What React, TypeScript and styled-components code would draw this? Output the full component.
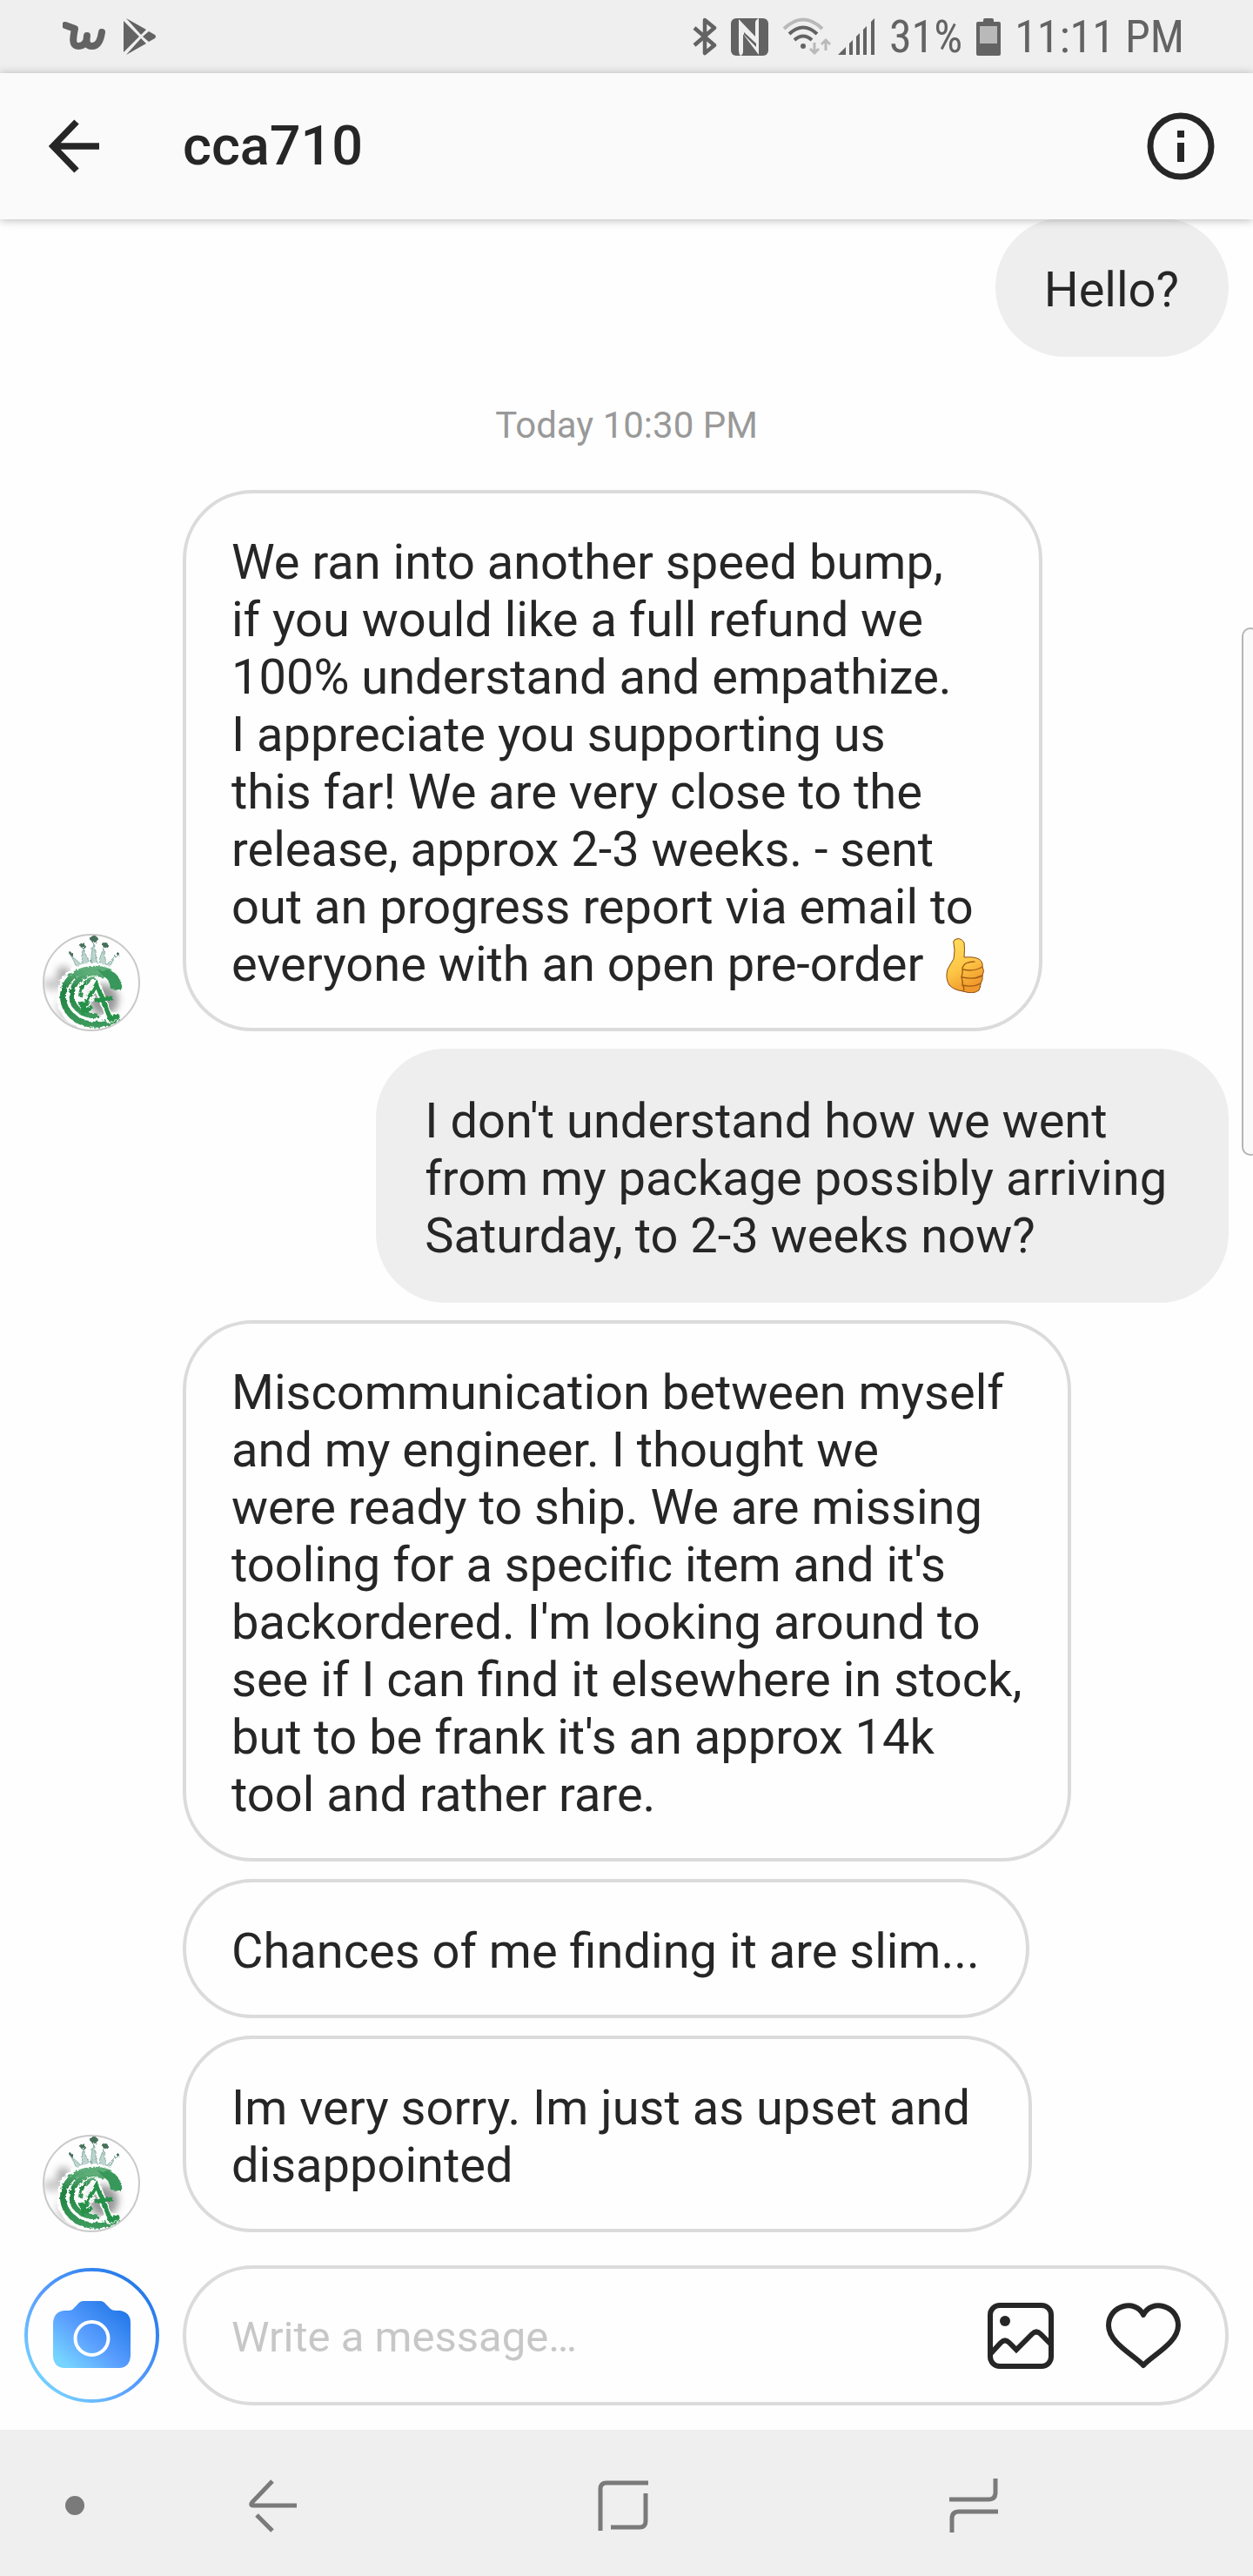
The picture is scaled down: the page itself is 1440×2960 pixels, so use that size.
import React from "react";
import styled, { createGlobalStyle } from "styled-components";

const Global = createGlobalStyle`
  * { box-sizing: border-box; }
  body { margin: 0; background: #fefefe; font-family: Roboto, "Noto Sans", sans-serif; color: #262626; }
  button { border: 0; padding: 0; background: none; color: inherit; display: flex; cursor: pointer; }
  svg { display: block; flex: none; }
`;

const Screen = styled.div`
  display: flex;
  flex-direction: column;
  min-height: 100vh;
  position: relative;
`;

const StatusBar = styled.div`
  display: flex;
  justify-content: space-between;
  align-items: center;
  height: 84px;
  padding: 0 79px 0 72px;
  background: #efefef;
  color: #636363;
`;

const StatusGroup = styled.div<{ $gap: number }>`
  display: flex;
  align-items: center;
  gap: ${(p) => p.$gap}px;
`;

const StatusText = styled.span`
  padding-top: 2px;
  font-family: "Roboto Condensed", Roboto, sans-serif;
  font-size: 52px;
  line-height: 62px;
`;

const Header = styled.header`
  display: flex;
  align-items: center;
  height: 168px;
  padding: 0 44px 0 56px;
  background: #fafafa;
  box-shadow: 0 1px 10px rgba(0, 0, 0, 0.28);
  position: relative;
  z-index: 1;
`;

const Title = styled.h1`
  flex: 1;
  margin: 0 0 0 96px;
  font-size: 63px;
  font-weight: 500;
  line-height: 74px;
`;

const Feed = styled.main`
  flex: 1;
  display: flex;
  flex-direction: column;
  gap: 20px;
  margin-top: -2px;
  padding: 0 28px 38px 49px;
`;

const Stamp = styled.time`
  align-self: center;
  margin: 35px 0 30px;
  padding-right: 21px;
  font-size: 42px;
  line-height: 48px;
  color: #999;
`;

const Row = styled.div<{ $own?: boolean }>`
  display: flex;
  align-items: flex-end;
  gap: 49px;
  justify-content: ${(p) => (p.$own ? "flex-end" : "flex-start")};
`;

const AvatarSlot = styled.div`
  width: 112px;
  flex: none;
`;

const Bubble = styled.p<{ $own?: boolean }>`
  margin: 0;
  padding: 46px 53px 40px 52px;
  border: 4px solid ${(p) => (p.$own ? "#eeeeee" : "#dbdbdb")};
  border-radius: 80px;
  background: ${(p) => (p.$own ? "#eeeeee" : "#fefefe")};
  font-size: 56px;
  line-height: 66px;
  white-space: pre;
`;

const EmojiSvg = styled.svg`
  display: inline-block;
  vertical-align: top;
  width: 66px;
  height: 66px;
`;

const Composer = styled.form`
  display: flex;
  align-items: center;
  gap: 27px;
  padding: 0 28px 28px;
`;

const Field = styled.div`
  flex: 1;
  display: flex;
  align-items: center;
  gap: 60px;
  height: 161px;
  padding: 0 51px 0 52px;
  border: 4px solid #dbdbdb;
  border-radius: 81px;
`;

const TextBox = styled.input`
  flex: 1;
  min-width: 0;
  padding: 4px 0 0;
  border: 0;
  outline: 0;
  background: none;
  color: #262626;
  font-family: inherit;
  font-size: 49px;
  line-height: 58px;
  &::placeholder { color: #c7c7c7; opacity: 1; }
`;

const NavBar = styled.nav`
  display: grid;
  grid-template-columns: 38px 1fr 1fr 1fr 120px;
  align-items: center;
  height: 168px;
  padding: 6px 0 0 75px;
  background: #efefef;
`;

const NavButton = styled.button`
  justify-content: center;
`;

const EdgeHandle = styled.div`
  position: absolute;
  top: 721px;
  right: -7px;
  width: 20px;
  height: 607px;
  border: 2px solid #b5b5b5;
  border-radius: 14px;
  background: #fafafa;
`;

const Clip = styled.div`
  position: absolute;
  inset: 0;
  overflow: hidden;
  pointer-events: none;
`;

const Avatar = () => (
  <svg width="112" height="112" viewBox="0 0 112 112" role="img" aria-label="cca710">
    <defs>
      <filter id="soft"><feGaussianBlur stdDeviation="4" /></filter>
      <filter id="rough" x="-10%" y="-10%" width="120%" height="120%">
        <feTurbulence type="fractalNoise" baseFrequency="0.25" numOctaves="2" result="noise" />
        <feDisplacementMap in="SourceGraphic" in2="noise" scale="5" />
      </filter>
      <linearGradient id="leaf" x1="0" y1="0" x2="0" y2="1">
        <stop offset="0" stopColor="#5fae7a" /><stop offset=".4" stopColor="#1f8140" /><stop offset="1" stopColor="#3c9a5c" />
      </linearGradient>
      <clipPath id="disc"><circle cx="56" cy="56" r="55" /></clipPath>
    </defs>
    <circle cx="56" cy="56" r="55" fill="#fefefe" />
    <g clipPath="url(#disc)">
      <g filter="url(#soft)" fill="#8d8d8d">
        <ellipse cx="24" cy="46" rx="8" ry="9" opacity=".7" />
        <ellipse cx="13" cy="58" rx="13" ry="7" opacity=".45" />
        <ellipse cx="24" cy="88" rx="9" ry="16" opacity=".3" />
        <ellipse cx="70" cy="76" rx="17" ry="18" fill="#6d6d6d" opacity=".7" />
        <ellipse cx="54" cy="106" rx="24" ry="6" opacity=".6" />
      </g>
      <g filter="url(#rough)">
        <path d="M41 41 32 24 45 36 46 16 55 36 58 8 63 36 70 16 73 36 85 24 75 41Q58 34 41 41Z" fill="#bdd5cf" stroke="#8bb0a6" strokeWidth="1" />
        <g fill="#47705a">
          <circle cx="59" cy="6" r="4" /><circle cx="46" cy="13" r="3" /><circle cx="72" cy="13" r="3" />
          <circle cx="33" cy="23" r="2" /><circle cx="86" cy="23" r="2" />
        </g>
        <g fill="none">
          <path d="M76 46C58 36 34 42 26 62C18 88 42 107 64 103C74 102 82 99 87 95" stroke="#fff" strokeWidth="16" />
          <path d="M78 44C58 36 33 41 25 62C17 88 42 107 64 104C74 103 82 100 87 96" stroke="url(#leaf)" strokeWidth="7" />
          <path d="M70 48C54 40 38 50 34 66C31 84 46 96 64 94" stroke="url(#leaf)" strokeWidth="6" />
          <path d="M62 51C50 50 44 60 43 72" stroke="url(#leaf)" strokeWidth="4" />
          <path d="M46 88 62 58 77 97 87 93" stroke="#fff" strokeWidth="9" />
          <path d="M46 86 62 58 78 98 88 94" stroke="#25914a" strokeWidth="5" />
          <path d="M44 78 47 90 57 84M60 77 80 74" stroke="#25914a" strokeWidth="5" />
        </g>
        <path d="M64 42C82 38 92 50 90 65L78 63Q77 52 70 49Z" fill="#38975a" />
      </g>
    </g>
    <circle cx="56" cy="56" r="55" fill="none" stroke="#c9c9c9" strokeWidth="2" />
  </svg>
);

const ThumbsUp = () => (
  <EmojiSvg viewBox="0 0 66 66" role="img" aria-label="thumbs up">
    <defs>
      <linearGradient id="skin" x1="0" y1="0" x2="0.4" y2="1">
        <stop offset="0" stopColor="#ffe063" /><stop offset=".6" stopColor="#fdc545" /><stop offset="1" stopColor="#f0982b" />
      </linearGradient>
    </defs>
    <path d="M22 5Q28 1 33 8Q34 16 33 25Q44 24 50 27Q55 30 54 36Q57 40 54 46Q55 51 52 55Q52 59 50 63Q43 68 32 64Q22 63 16 57Q11 49 14 39Q17 33 21 27Q23 16 21 9Q20 7 22 5Z" fill="url(#skin)" stroke="#8a4b12" strokeWidth="1" />
    <path d="M45 30Q33 30 31 37Q32 42 30 48Q32 53 31 57Q34 60 32 64M54 36Q44 42 32 39M54 46Q44 51 31 48M52 55Q43 60 31 57" fill="none" stroke="#a35d16" strokeWidth="1.4" strokeLinecap="round" />
  </EmojiSvg>
);

const WishIcon = () => (
  <svg width="50" height="36" viewBox="0 0 50 36" aria-hidden="true">
    <path d="M3 5 14 9C12 19 10 29 18 29C26 29 28 22 28 17C27 24 27 29 34 29C42 29 44 20 45 13" fill="none" stroke="#636363" strokeWidth="8" strokeLinecap="round" strokeLinejoin="round" />
  </svg>
);

const PlayIcon = () => (
  <svg width="38" height="42" viewBox="0 0 38 42" fill="#636363" aria-hidden="true">
    <path d="M0 3 18 21 0 39ZM3 0 26 13 20 19ZM3 42 20 23 26 29ZM29 15 36 19Q38 21 36 23L29 27 22 21Z" />
  </svg>
);

const BluetoothIcon = () => (
  <svg width="28" height="44" viewBox="0 0 28 44" fill="none" stroke="#636363" strokeWidth="4.5" strokeLinejoin="round" aria-hidden="true">
    <path d="M2 12 25 32 14 41V3L25 12 2 32" />
  </svg>
);

const NfcIcon = () => (
  <svg width="43" height="43" viewBox="0 0 43 43" aria-hidden="true">
    <rect width="43" height="43" rx="6" fill="#636363" />
    <path d="M9 1 28 21V5Q28 2 32 0Q32 2 32 6V42L14 18V38Q14 42 11 43Q9 41 9 37Z" fill="#efefef" />
    <path d="M14 14 28 29V25L32 29V41L14 18Z" fill="#efefef" />
    <path d="M15 16 29 29V33L15 19Z" fill="#636363" />
  </svg>
);

const WifiIcon = () => (
  <svg width="56" height="44" viewBox="0 0 56 44" fill="none" strokeWidth="4" aria-hidden="true">
    <path d="M2 13Q24-8 46 13" stroke="#b9b9b9" />
    <path d="M8 19Q24 4 40 19M14 26Q24 17 34 26" stroke="#636363" />
    <circle cx="24" cy="33" r="3" fill="#636363" />
    <path d="M37 29V41M32 36 37 41 42 36M50 38V26M45 31 50 26 55 31" stroke="#b9b9b9" strokeWidth="3" />
  </svg>
);

const SignalIcon = () => (
  <svg width="43" height="42" viewBox="0 0 43 42" fill="#636363" aria-hidden="true">
    <path d="M0 42 9 33V42ZM13 29 17 25V42H13ZM21 21 25 17V42H21ZM29 13 33 9V42H29ZM38 4 42 0V42H38Z" />
  </svg>
);

const BatteryIcon = () => (
  <svg width="28" height="43" viewBox="0 0 28 43" aria-hidden="true">
    <path d="M8 4V2Q8 0 10 0H18Q20 0 20 2V4H26Q28 4 28 6V41Q28 43 26 43H2Q0 43 0 41V6Q0 4 2 4Z" fill="#636363" />
    <path d="M4 9H24V29H4Z" fill="#b9b9b9" />
  </svg>
);

const CameraIcon = () => (
  <svg width="155" height="155" viewBox="0 0 155 155" aria-hidden="true">
    <defs>
      <linearGradient id="ring" x1="0" y1="1" x2="1" y2="0">
        <stop offset=".1" stopColor="#77d4ff" /><stop offset=".45" stopColor="#5a9fff" /><stop offset=".9" stopColor="#2277e8" />
      </linearGradient>
    </defs>
    <circle cx="77.5" cy="77.5" r="75.5" fill="none" stroke="url(#ring)" strokeWidth="4" />
    <path d="M68 38H87Q91 38 94 42L99 47Q101 49 105 49H110Q122 51 122 63V101Q121 114 110 115H45Q34 114 33 102V63Q34 50 46 49H51Q55 49 57 46L61 42Q64 38 68 38Z" fill="url(#ring)" />
    <circle cx="77.5" cy="81" r="19" fill="none" stroke="#fff" strokeWidth="4" />
  </svg>
);

const Theirs = ({ avatar, children }: { avatar?: boolean; children: React.ReactNode }) => (
  <Row>
    <AvatarSlot>{avatar && <Avatar />}</AvatarSlot>
    <Bubble>{children}</Bubble>
  </Row>
);

const Mine = ({ children }: { children: React.ReactNode }) => (
  <Row $own>
    <Bubble $own>{children}</Bubble>
  </Row>
);

export default function App() {
  return (
    <>
      <Global />
      <Screen>
        <StatusBar>
          <StatusGroup $gap={20}>
            <WishIcon />
            <PlayIcon />
          </StatusGroup>
          <StatusGroup $gap={16}>
            <BluetoothIcon />
            <NfcIcon />
            <StatusGroup $gap={8}>
              <WifiIcon />
              <SignalIcon />
            </StatusGroup>
            <StatusText>31%</StatusText>
            <BatteryIcon />
            <StatusText>11:11 PM</StatusText>
          </StatusGroup>
        </StatusBar>
        <Header>
          <button type="button" aria-label="Back">
            <svg width="58" height="62" viewBox="0 0 58 62" fill="none" stroke="#262626" strokeWidth="7.5">
              <path d="M32 3 5 31 32 59M5 31H58" />
            </svg>
          </button>
          <Title>cca710</Title>
          <button type="button" aria-label="Details">
            <svg width="78" height="78" viewBox="0 0 78 78">
              <circle cx="39" cy="39" r="35" fill="none" stroke="#262626" strokeWidth="7" />
              <path d="M35 21H43V29H35ZM35 35H43V57H35Z" fill="#262626" />
            </svg>
          </button>
        </Header>
        <Feed>
          <Mine>Hello?</Mine>
          <Stamp>Today 10:30 PM</Stamp>
          <Theirs avatar>
            {"We ran into another speed bump,\nif you would like a full refund we\n100% understand and empathize.\nI appreciate you supporting us\nthis far! We are very close to the\nrelease, approx 2-3 weeks. - sent\nout an progress report via email to\neveryone with an open pre-order "}
            <ThumbsUp />
          </Theirs>
          <Mine>{"I don't understand how we went\nfrom my package possibly arriving \nSaturday, to 2-3 weeks now?"}</Mine>
          <Theirs>
            {"Miscommunication between myself\nand my engineer. I thought we\nwere ready to ship. We are missing\ntooling for a specific item and it's\nbackordered. I'm looking around to\nsee if I can find it elsewhere in stock,\nbut to be frank it's an approx 14k\ntool and rather rare."}
          </Theirs>
          <Theirs>Chances of me finding it are slim...</Theirs>
          <Theirs avatar>{"Im very sorry. Im just as upset and \ndisappointed"}</Theirs>
        </Feed>
        <Composer onSubmit={(e) => e.preventDefault()}>
          <button type="button" aria-label="Camera"><CameraIcon /></button>
          <Field>
            <TextBox type="text" aria-label="Write a message" placeholder="Write a message…" />
            <button type="button" aria-label="Add photo">
              <svg width="76" height="76" viewBox="0 0 76 76" fill="none" stroke="#262626" strokeWidth="6">
                <rect x="3" y="3" width="70" height="70" rx="11" />
                <path d="M4 58 15 46Q20 41 25 46L33 54 51 36Q56 31 61 36L73 48" />
                <circle cx="20" cy="21" r="6" fill="#262626" stroke="none" />
              </svg>
            </button>
            <button type="button" aria-label="Send like">
              <svg width="86" height="76" viewBox="0 0 86 76" fill="none" stroke="#262626" strokeWidth="6" strokeLinejoin="round">
                <path d="M43 72C32 60 3 46 3 26C3 3 34-5 43 14C52-5 83 3 83 26C83 46 54 60 43 72Z" />
              </svg>
            </button>
          </Field>
        </Composer>
        <NavBar aria-label="System">
          <button type="button" aria-label="Toggle bar">
            <svg width="22" height="22" viewBox="0 0 22 22"><circle cx="11" cy="11" r="11" fill="#7a7a7a" /></svg>
          </button>
          <NavButton type="button" aria-label="System back">
            <svg width="56" height="62" viewBox="0 0 56 62" fill="none" stroke="#7a7a7a" strokeWidth="5">
              <path d="M27 3 4 27Q1 31 5 31H55M9 42 27 60" />
            </svg>
          </NavButton>
          <NavButton type="button" aria-label="Home">
            <svg width="58" height="58" viewBox="0 0 58 58" fill="none" stroke="#7a7a7a" strokeWidth="5">
              <path d="M3 58V10Q3 3 10 3H58M15 54H48Q55 54 55 47V15" />
            </svg>
          </NavButton>
          <NavButton type="button" aria-label="Recent apps">
            <svg width="56" height="62" viewBox="0 0 56 62" fill="none" stroke="#7a7a7a" strokeWidth="5">
              <path d="M0 24H45Q53 24 53 16V0M56 38H11Q3 38 3 46V62" />
            </svg>
          </NavButton>
        </NavBar>
        <Clip><EdgeHandle /></Clip>
      </Screen>
    </>
  );
}
